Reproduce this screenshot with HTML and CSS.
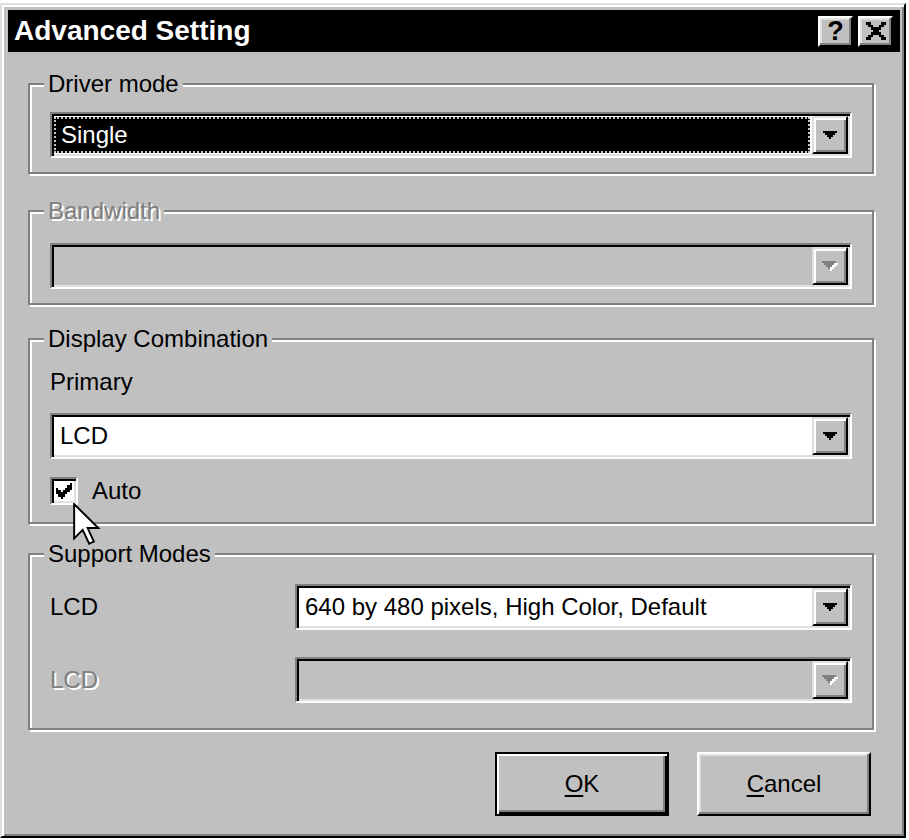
FILE: index.html
```html
<!DOCTYPE html>
<html>
<head>
<meta charset="utf-8">
<title>Advanced Setting</title>
<link rel="stylesheet" href="styles.css">
</head>
<body>
<div class="dialog">
  <div class="titlebar">
    <div class="title">Advanced Setting</div>
    <div class="capbtns">
      <div class="capbtn help">?</div>
      <div class="capbtn">
        <svg class="xglyph" width="22" height="18" viewBox="0 0 8 7" shape-rendering="crispEdges"><path d="M0 0h2v1h-2z M6 0h2v1h-2z M1 1h2v1h-2z M5 1h2v1h-2z M2 2h4v1h-4z M3 3h2v1h-2z M2 4h4v1h-4z M1 5h2v1h-2z M5 5h2v1h-2z M0 6h2v1h-2z M6 6h2v1h-2z"/></svg>
      </div>
    </div>
  </div>

  <div class="group g1">
    <div class="legend">Driver mode</div>
    <div class="combo c1">
      <div class="field sel">Single</div>
      <div class="cbtn"><svg width="14" height="8" viewBox="0 0 14 8"><path d="M0 0H14V2H12V4H10V6H8V8H6V6H4V4H2V2H0Z"/></svg></div>
    </div>
  </div>

  <div class="group g2">
    <div class="legend dis">Bandwidth</div>
    <div class="combo c2 disabled">
      <div class="field"></div>
      <div class="cbtn"><svg width="16" height="10" viewBox="0 0 16 10"><path fill="#fff" d="M2 2H16V4H14V6H12V8H10V10H8V8H6V6H4V4H2Z"/><path fill="#808080" d="M0 0H14V2H12V4H10V6H8V8H6V6H4V4H2V2H0Z"/></svg></div>
    </div>
  </div>

  <div class="group g3">
    <div class="legend">Display Combination</div>
    <div class="plabel">Primary</div>
    <div class="combo c3">
      <div class="field">LCD</div>
      <div class="cbtn"><svg width="14" height="8" viewBox="0 0 14 8"><path d="M0 0H14V2H12V4H10V6H8V8H6V6H4V4H2V2H0Z"/></svg></div>
    </div>
    <div class="checkrow">
      <div class="checkbox"><svg width="16" height="16" viewBox="0 0 7 7" shape-rendering="crispEdges"><path d="M6 0h1v1h-1z M5 1h2v1h-2z M0 2h1v1h-1z M4 2h3v1h-3z M0 3h2v1h-2z M3 3h3v1h-3z M0 4h5v1h-5z M1 5h3v1h-3z M2 6h1v1h-1z"/></svg></div>
      <div class="cklabel">Auto</div>
    </div>
  </div>

  <div class="group g4">
    <div class="legend">Support Modes</div>
    <div class="mrow r1">
      <div class="mlabel">LCD</div>
      <div class="combo">
        <div class="field">640 by 480 pixels, High Color, Default</div>
        <div class="cbtn"><svg width="14" height="8" viewBox="0 0 14 8"><path d="M0 0H14V2H12V4H10V6H8V8H6V6H4V4H2V2H0Z"/></svg></div>
      </div>
    </div>
    <div class="mrow r2">
      <div class="mlabel dis">LCD</div>
      <div class="combo disabled">
        <div class="field"></div>
        <div class="cbtn"><svg width="16" height="10" viewBox="0 0 16 10"><path fill="#fff" d="M2 2H16V4H14V6H12V8H10V10H8V8H6V6H4V4H2Z"/><path fill="#808080" d="M0 0H14V2H12V4H10V6H8V8H6V6H4V4H2V2H0Z"/></svg></div>
      </div>
    </div>
  </div>

  <div class="buttons">
    <div class="btn default"><span class="u">O</span>K</div>
    <div class="btn"><span class="u">C</span>ancel</div>
  </div>

  <svg class="cursor" width="28" height="45" viewBox="-0.5 -0.5 13 21"><path d="M0 0 L0 16 L4 12 L7 18.5 L9.2 17.5 L6.3 11.2 L11.3 11.2 Z" fill="#fff" stroke="#000" stroke-width="0.9" stroke-linejoin="miter"/></svg>
</div>
</body>
</html>
```
FILE: styles.css
```css
* { box-sizing: border-box; }
html, body { margin: 0; background: #fff; }
body {
  font-family: "Liberation Sans", Arial, sans-serif;
  font-size: 24px;
  color: #000;
}
.dialog {
  position: relative;
  width: 906px;
  height: 835px;
  margin-top: 3px;
  background: #c0c0c0;
  border: 2px solid;
  border-color: #dfdfdf #000 #000 #dfdfdf;
  box-shadow: inset 2px 2px #fff, inset -2px -2px #808080;
  padding: 5px 4px 4px 6px;
}
.titlebar {
  height: 42px;
  background: #000;
  color: #fff;
  display: flex;
  align-items: center;
  padding: 0 7px 0 6px;
}
.title { flex: 1; font-weight: bold; font-size: 28px; }
.capbtns { display: flex; gap: 5px; }
.capbtn {
  width: 35px;
  height: 31px;
  background: #c0c0c0;
  border: 2px solid;
  border-color: #fff #000 #000 #fff;
  box-shadow: inset -2px -2px #808080, inset 2px 2px #dfdfdf;
  display: flex;
  align-items: center;
  justify-content: center;
  color: #000;
}
.help { font-weight: bold; font-size: 27px; line-height: 1; }
.xglyph { fill: #000; }

.group {
  border: 2px solid #808080;
  box-shadow: inset 2px 2px #fff, 2px 2px #fff;
  margin: 0 26px 0 20px;
  padding: 0 20px 14px 20px;
}
.g1 { margin-top: 31px; }
.g2 { margin-top: 36px; }
.g3 { margin-top: 33px; padding-bottom: 17px; }
.g4 { margin-top: 29px; padding-bottom: 25px; }
.legend {
  display: table;
  margin: -15px 0 0 -6px;
  padding: 0 4px;
  background: #c0c0c0;
  line-height: 28px;
}
.dis { color: #808080; text-shadow: 2px 2px 0 #fff; }

.combo {
  display: flex;
  height: 46px;
  border: 2px solid;
  border-color: #808080 #fff #fff #808080;
  box-shadow: inset 2px 2px #000, inset -2px -2px #dfdfdf;
  padding: 2px;
  background: #fff;
}
.combo.disabled { background: #c0c0c0; }
.c1 { margin-top: 14px; }
.c2 { margin-top: 18px; }
.c3 { margin-top: 17px; }
.field {
  flex: 1;
  display: flex;
  align-items: center;
  padding-left: 6px;
  white-space: nowrap;
}
.field.sel {
  background: #000;
  color: #fff;
  margin: 1px 2px 1px 0;
  padding-left: 7px;
  outline: 2px dotted #c8c8c8;
  outline-offset: -2px;
}
.cbtn {
  width: 36px;
  background: #c0c0c0;
  border: 2px solid;
  border-color: #dfdfdf #000 #000 #dfdfdf;
  box-shadow: inset 2px 2px #fff, inset -2px -2px #808080;
  display: flex;
  align-items: center;
  justify-content: center;
}
.cbtn svg { display: block; }

.plabel { margin-top: 15px; line-height: 28px; }
.checkrow {
  display: flex;
  align-items: center;
  gap: 14px;
  margin-top: 18px;
}
.checkbox {
  width: 28px;
  height: 28px;
  border: 2px solid;
  border-color: #808080 #fff #fff #808080;
  box-shadow: inset 2px 2px #000, inset -2px -2px #dfdfdf;
  background: #fff;
  display: flex;
  align-items: center;
  justify-content: center;
}
.checkbox svg { display: block; }
.cklabel { line-height: 28px; }

.mrow {
  display: grid;
  grid-template-columns: 245px 1fr;
  align-items: center;
}
.r1 { margin-top: 16px; }
.r2 { margin-top: 27px; }

.buttons {
  display: flex;
  justify-content: flex-end;
  gap: 28px;
  margin: 22px 29px 0 0;
}
.btn {
  width: 174px;
  height: 64px;
  border: 2px solid;
  border-color: #fff #000 #000 #fff;
  box-shadow: inset -2px -2px #808080, inset 2px 2px #dfdfdf;
  display: flex;
  align-items: center;
  justify-content: center;
}
.btn.default {
  border-color: #000;
  box-shadow: inset 2px 2px #fff, inset -2px -2px #000, inset -4px -4px #808080;
}
.u { text-decoration: underline; text-underline-offset: 3px; text-decoration-thickness: 2px; }

.cursor {
  position: absolute;
  left: 71px;
  top: 498px;
  display: block;
}
```
